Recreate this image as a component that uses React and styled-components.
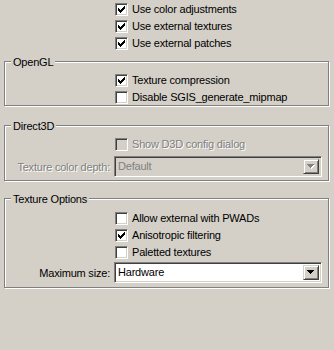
import React from "react";
import styled, { createGlobalStyle } from "styled-components";

const Global = createGlobalStyle`
  html, body { margin: 0; padding: 0; background: #d4d0c8; }
  body { width: 334px; height: 350px; overflow: hidden; }
  * { box-sizing: border-box; }
`;

const Page = styled.div`
  width: 334px;
  height: 350px;
  padding: 3px 5px 0 4px;
  font-family: "Liberation Sans", Arial, sans-serif;
  font-size: 11px;
  letter-spacing: -0.2px;
  color: #000;
  display: flex;
  flex-direction: column;
`;

const CheckList = styled.div`
  display: flex;
  flex-direction: column;
  gap: 4px;
  padding-left: ${(p) => p.$indent}px;
`;

const Row = styled.label`
  display: flex;
  align-items: center;
  height: 13px;
  gap: 4px;
  white-space: nowrap;
`;

const Box = styled.span`
  width: 13px;
  height: 13px;
  flex: none;
  display: flex;
  align-items: center;
  justify-content: center;
  border: 1px solid;
  border-color: #808080 #ffffff #ffffff #808080;
  box-shadow: inset 1px 1px 0 #404040, inset -1px -1px 0 #d4d0c8;
  background: ${(p) => (p.$disabled ? "#d4d0c8" : "#ffffff")};
`;

const Text = styled.span`
  line-height: 13px;
  color: ${(p) => (p.$disabled ? "#808080" : "#000")};
  text-shadow: ${(p) => (p.$disabled ? "1px 1px 0 #ffffff" : "none")};
`;

const Group = styled.div`
  position: relative;
  margin-top: ${(p) => p.$top}px;
  width: 325px;
  border: 1px solid #808080;
  box-shadow: 1px 1px 0 #ffffff, inset 1px 1px 0 #ffffff;
  padding: ${(p) => p.$pad};
  display: flex;
  flex-direction: column;
`;

const Legend = styled.span`
  position: absolute;
  top: -6px;
  left: 6px;
  padding: 0 2px;
  background: #d4d0c8;
  line-height: 13px;
`;

const ComboRow = styled.div`
  display: flex;
  align-items: center;
  margin-top: ${(p) => p.$top}px;
`;

const ComboLabel = styled.span`
  width: 109px;
  padding-right: 4px;
  text-align: right;
  white-space: nowrap;
  color: ${(p) => (p.$disabled ? "#808080" : "#000")};
  text-shadow: ${(p) => (p.$disabled ? "1px 1px 0 #ffffff" : "none")};
`;

const Combo = styled.div`
  width: 208px;
  height: 21px;
  display: flex;
  align-items: stretch;
  border: 1px solid;
  border-color: #808080 #ffffff #ffffff #808080;
  box-shadow: inset 1px 1px 0 #404040, inset -1px -1px 0 #d4d0c8;
  padding: 2px;
  background: ${(p) => (p.$disabled ? "#d4d0c8" : "#ffffff")};
`;

const ComboValue = styled.span`
  flex: 1;
  display: flex;
  align-items: center;
  padding-left: 1px;
  line-height: 13px;
  color: ${(p) => (p.$disabled ? "#808080" : "#000")};
`;

const DropButton = styled.span`
  width: 16px;
  flex: none;
  display: flex;
  align-items: center;
  justify-content: center;
  background: #d4d0c8;
  border: 1px solid;
  border-color: #d4d0c8 #404040 #404040 #d4d0c8;
  box-shadow: inset 1px 1px 0 #ffffff, inset -1px -1px 0 #808080;
`;

const CheckMark = () => (
  <svg width="7" height="7" viewBox="0 0 7 7" shapeRendering="crispEdges">
    {[2, 3, 4, 3, 2, 1, 0].map((y, x) => (
      <rect key={x} x={x} y={y} width="1" height="3" fill="#000" />
    ))}
  </svg>
);

const Arrow = ({ disabled }) => (
  <svg width="8" height="5" viewBox="0 0 8 5" shapeRendering="crispEdges">
    {disabled && (
      <g fill="#ffffff">
        <rect x="1" y="1" width="7" height="1" />
        <rect x="2" y="2" width="5" height="1" />
        <rect x="3" y="3" width="3" height="1" />
        <rect x="4" y="4" width="1" height="1" />
      </g>
    )}
    <g fill={disabled ? "#808080" : "#000"}>
      <rect x="0" y="0" width="7" height="1" />
      <rect x="1" y="1" width="5" height="1" />
      <rect x="2" y="2" width="3" height="1" />
      <rect x="3" y="3" width="1" height="1" />
    </g>
  </svg>
);

const Check = ({ label, checked, disabled }) => (
  <Row>
    <Box $disabled={disabled}>{checked && <CheckMark />}</Box>
    <Text $disabled={disabled}>{label}</Text>
  </Row>
);

const ComboField = ({ label, value, disabled, top }) => (
  <ComboRow $top={top}>
    <ComboLabel $disabled={disabled}>{label}</ComboLabel>
    <Combo $disabled={disabled}>
      <ComboValue $disabled={disabled}>{value}</ComboValue>
      <DropButton>
        <Arrow disabled={disabled} />
      </DropButton>
    </Combo>
  </ComboRow>
);

export default function App() {
  return (
    <>
      <Global />
      <Page>
        <CheckList $indent={111}>
          <Check label="Use color adjustments" checked />
          <Check label="Use external textures" checked />
          <Check label="Use external patches" checked />
        </CheckList>

        <Group $top={11} $pad="12px 0 1px 0">
          <Legend>OpenGL</Legend>
          <CheckList $indent={110}>
            <Check label="Texture compression" checked />
            <Check label="Disable SGIS_generate_mipmap" />
          </CheckList>
        </Group>

        <Group $top={19} $pad="12px 0 3px 0">
          <Legend>Direct3D</Legend>
          <CheckList $indent={110}>
            <Check label="Show D3D config dialog" disabled />
          </CheckList>
          <ComboField label="Texture color depth:" value="Default" disabled top={5} />
        </Group>

        <Group $top={17} $pad="13px 0 4px 0">
          <Legend>Texture Options</Legend>
          <CheckList $indent={110}>
            <Check label="Allow external with PWADs" />
            <Check label="Anisotropic filtering" checked />
            <Check label="Paletted textures" />
          </CheckList>
          <ComboField label="Maximum size:" value="Hardware" top={3} />
        </Group>
      </Page>
    </>
  );
}
